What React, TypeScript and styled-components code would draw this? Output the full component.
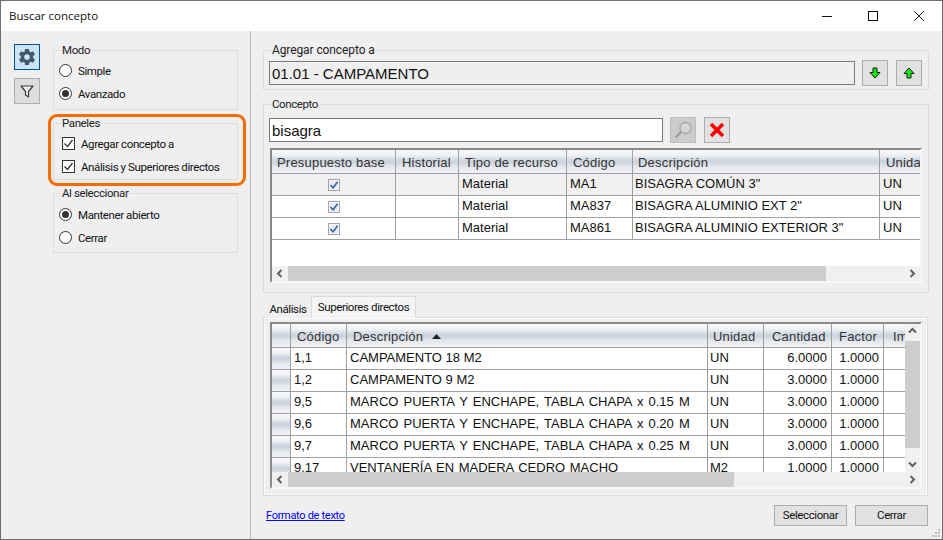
import { ReactNode } from 'react';
import styled, { createGlobalStyle } from 'styled-components';
import { IoSettingsSharp } from 'react-icons/io5';

const GlobalStyle = createGlobalStyle`
  html, body {
    margin: 0;
    padding: 0;
    background: #efefef;
  }
`;

const uiFont = `Roboto, "Open Sans", sans-serif`;
const titleFont = `"Open Sans", "Noto Sans", sans-serif`;
const gridFont = `"Liberation Sans", Arial, sans-serif`;

const Window = styled.div`
  position: relative;
  box-sizing: border-box;
  width: 943px;
  height: 540px;
  border: 1px solid #6f6f6f;
  background: #efefef;
  display: flex;
  flex-direction: column;
  overflow: hidden;
  font-family: ${uiFont};
  font-size: 11.5px;
  letter-spacing: -0.4px;
  color: #111;
`;

const TitleBar = styled.header`
  height: 30px;
  flex: none;
  background: #fff;
  display: flex;
  align-items: center;
  justify-content: space-between;
  padding-left: 8px;
`;

const Title = styled.h1`
  margin: -2px 0 0;
  font-family: ${titleFont};
  font-size: 11.5px;
  font-weight: 400;
  letter-spacing: 0;
  color: #111;
`;

const WindowControls = styled.div`
  display: flex;
  align-items: center;
`;

const WindowControl = styled.div`
  width: 46px;
  height: 30px;
  display: flex;
  align-items: center;
  justify-content: center;
`;

const Body = styled.div`
  flex: 1;
  display: flex;
  min-height: 0;
`;

const LeftPane = styled.aside`
  width: 250px;
  flex: none;
  box-sizing: border-box;
  border-right: 1px solid #b8b8b8;
  display: flex;
  padding: 12px 0 0 13px;
`;

const ToolColumn = styled.div`
  width: 39px;
  flex: none;
  display: flex;
  flex-direction: column;
  gap: 8px;
  padding-top: 1px;
`;

const ToolButton = styled.div<{ $active?: boolean }>`
  box-sizing: border-box;
  width: 26px;
  height: 26px;
  display: flex;
  align-items: center;
  justify-content: center;
  background: ${p => (p.$active ? '#cce4f7' : '#dddddd')};
  border: 1px solid ${p => (p.$active ? '#005499' : '#adadad')};
`;

const OptionColumn = styled.div`
  width: 185px;
  display: flex;
  flex-direction: column;
  gap: 6px;
`;

const Group = styled.fieldset<{ $height: number; $pad?: string }>`
  box-sizing: border-box;
  margin: 0;
  min-width: 0;
  height: ${p => p.$height}px;
  padding: ${p => p.$pad ?? '0'};
  border: 1px solid #dcdcdc;
`;

const GroupTitle = styled.legend<{ $indent: number; $size: number; $track: number }>`
  margin-left: ${p => p.$indent}px;
  padding: 0 1px;
  height: 14px;
  line-height: 15px;
  font-size: ${p => p.$size}px;
  letter-spacing: ${p => p.$track}px;
  color: #222;
`;

const OptionList = styled.div<{ $indent: number; $top?: number }>`
  display: flex;
  flex-direction: column;
  gap: 10px;
  padding: ${p => p.$top ?? 7}px 0 0 ${p => p.$indent}px;
`;

const OptionRow = styled.label`
  display: flex;
  align-items: center;
  height: 13px;
  white-space: nowrap;
`;

const RadioMark = styled.input.attrs({ type: 'radio', readOnly: true })`
  appearance: none;
  box-sizing: border-box;
  width: 13px;
  height: 13px;
  margin: 0 6px 0 0;
  border: 1px solid #333;
  border-radius: 50%;
  background: #fff;
  display: grid;
  place-content: center;
  &:checked::before {
    content: '';
    display: block;
    width: 7px;
    height: 7px;
    border-radius: 50%;
    background: #333;
  }
`;

const CheckMark = styled.span`
  box-sizing: border-box;
  width: 13px;
  height: 13px;
  margin-right: 6px;
  border: 1px solid #333;
  background: #fff;
  display: flex;
  align-items: center;
  justify-content: center;
`;

const Highlight = styled.div`
  position: absolute;
  left: 47px;
  top: 113px;
  width: 198px;
  height: 72px;
  box-sizing: border-box;
  border: 3.5px solid #f76b00;
  border-radius: 9px;
  pointer-events: none;
`;

const RightPane = styled.main`
  flex: 1;
  min-width: 0;
  box-sizing: border-box;
  padding: 12px 13px 0 12px;
  display: flex;
  flex-direction: column;
`;

const GroupGap = styled.div`
  height: 7px;
  flex: none;
`;

const FieldRow = styled.div`
  display: flex;
  align-items: center;
  height: 26px;
  margin-bottom: 5px;
`;

const FieldBox = styled.div<{ $width: number; $bg: string }>`
  box-sizing: border-box;
  width: ${p => p.$width}px;
  height: 24px;
  border: 1px solid #7a7a7a;
  background: ${p => p.$bg};
  padding-left: 2px;
  font-family: ${gridFont};
  font-size: 15px;
  letter-spacing: 0;
  line-height: 23px;
  color: #111;
`;

const IconButton = styled.div<{ $gap: number; $disabled?: boolean }>`
  box-sizing: border-box;
  width: 26px;
  height: 26px;
  margin-left: ${p => p.$gap}px;
  display: flex;
  align-items: center;
  justify-content: center;
  background: ${p => (p.$disabled ? '#cccccc' : '#e1e1e1')};
  border: 1px solid ${p => (p.$disabled ? '#bfbfbf' : '#adadad')};
`;

const DataGrid = styled.div<{ $height: number; $left?: number }>`
  box-sizing: border-box;
  width: 652px;
  height: ${p => p.$height}px;
  margin-left: ${p => p.$left ?? 0}px;
  border-top: 2px solid #8a8a8a;
  border-left: 2px solid #8a8a8a;
  border-right: 2px solid #f7f7f7;
  border-bottom: 2px solid #f7f7f7;
  background: #fff;
  display: flex;
  flex-direction: column;
  font-family: ${gridFont};
  font-size: 13px;
  letter-spacing: 0;
  color: #111;
`;

const GridMain = styled.div`
  flex: 1;
  min-height: 0;
  display: flex;
`;

const GridViewport = styled.div`
  flex: 1;
  min-width: 0;
  overflow: hidden;
`;

const HeaderRow = styled.div<{ $cols: string }>`
  display: grid;
  grid-template-columns: ${p => p.$cols};
  height: 24px;
`;

const headerFill = `linear-gradient(#f8f9fb 0%, #eff1f5 22%, #d6dbe4 40%, #ccd2dd 52%, #e3e6ec 72%, #f1f3f6 100%)`;

const HeaderCell = styled.div<{ $pad?: number }>`
  box-sizing: border-box;
  background: ${headerFill};
  border-right: 1px solid #a0a0a0;
  border-bottom: 1px solid #a0a0a0;
  padding: 0 0 0 ${p => p.$pad ?? 6}px;
  line-height: 25px;
  font-size: 13px;
  letter-spacing: 0.2px;
  color: #333;
  white-space: nowrap;
  overflow: hidden;
`;

const Row = styled.div<{ $cols: string; $current?: boolean }>`
  display: grid;
  grid-template-columns: ${p => p.$cols};
  height: 22px;
  background: ${p => (p.$current ? '#f0f0f0' : '#fff')};
`;

const Cell = styled.div<{ $align?: string; $center?: boolean; $spread?: number; $pad?: number }>`
  box-sizing: border-box;
  border-right: 1px solid #a0a0a0;
  border-bottom: 1px solid #a0a0a0;
  padding: 0 ${p => (p.$align === 'right' ? 4 : 3)}px 0 ${p => p.$pad ?? 3}px;
  line-height: 19px;
  text-align: ${p => p.$align ?? 'left'};
  word-spacing: ${p => p.$spread ?? 0}px;
  white-space: nowrap;
  overflow: hidden;
  ${p => p.$center && 'display: flex; align-items: center; justify-content: center;'}
`;

const RowHandle = styled.div`
  border-right: 1px solid #a0a0a0;
  border-bottom: 1px solid #a0a0a0;
  background: ${headerFill};
`;

const GridCheck = styled.span`
  box-sizing: border-box;
  width: 12px;
  height: 12px;
  border: 1px solid #a5a5a5;
  background: #e6ebf3;
  box-shadow: inset 0 0 0 1px #f4f6f9;
  display: flex;
  align-items: center;
  justify-content: center;
`;

const HScroll = styled.div`
  flex: none;
  height: 15px;
  background: #f0f0f0;
  display: flex;
  align-items: center;
`;

const VScroll = styled.div`
  flex: none;
  width: 15px;
  background: #f0f0f0;
  display: flex;
  flex-direction: column;
  align-items: center;
`;

const ScrollArrow = styled.div`
  flex: none;
  width: 16px;
  height: 15px;
  display: flex;
  align-items: center;
  justify-content: center;
`;

const HThumb = styled.div<{ $width: number }>`
  width: ${p => p.$width}px;
  height: 15px;
  background: #cdcdcd;
`;

const VThumb = styled.div<{ $height: number }>`
  width: 15px;
  height: ${p => p.$height}px;
  margin-top: 2px;
  background: #cdcdcd;
`;

const ScrollGap = styled.div`
  flex: 1;
`;

const TabStrip = styled.div`
  display: flex;
  align-items: flex-end;
  height: 21px;
  margin-top: 4px;
  padding-left: 2px;
  margin-bottom: -1px;
`;

const Tab = styled.div<{ $active?: boolean; $width: number }>`
  box-sizing: border-box;
  position: relative;
  width: ${p => p.$width}px;
  height: ${p => (p.$active ? 22 : 20)}px;
  padding-top: ${p => (p.$active ? 0 : 2)}px;
  text-align: center;
  line-height: ${p => (p.$active ? '21px' : '18px')};
  background: ${p => (p.$active ? '#f4f4f4' : '#efefef')};
  border: ${p => (p.$active ? '1px solid #dcdcdc' : 'none')};
  border-bottom: none;
  white-space: nowrap;
`;

const TabPanel = styled.div`
  box-sizing: border-box;
  height: 179px;
  margin-right: 1px;
  border: 1px solid #dcdcdc;
  outline: 1px solid #fbfbfb;
  outline-offset: -2px;
  padding: 4px 0 0 6px;
  background: #efefef;
`;

const Footer = styled.footer`
  display: flex;
  align-items: center;
  justify-content: space-between;
  margin-top: 8px;
  height: 22px;
  padding: 0 1px 0 3px;
`;

const TextLink = styled.a`
  color: #0000ff;
  text-decoration: underline;
  font-size: 11px;
  letter-spacing: -0.3px;
`;

const FooterButtons = styled.div`
  display: flex;
  gap: 8px;
`;

const PushButton = styled.div`
  box-sizing: border-box;
  width: 73px;
  height: 21px;
  border: 1px solid #adadad;
  background: #e1e1e1;
  text-align: center;
  line-height: 19px;
  color: #111;
`;

const ResizeGrip = styled.svg`
  position: absolute;
  right: 1px;
  bottom: 1px;
`;

// Drawings
const MinimizeIcon = () => (
  <svg width="12" height="12" viewBox="0 0 12 12"><path d="M1 6.5h10" stroke="#111" fill="none" /></svg>
);
const MaximizeIcon = () => (
  <svg width="12" height="12" viewBox="0 0 12 12"><rect x="1.5" y="1.5" width="9" height="9" stroke="#111" fill="none" /></svg>
);
const CloseIcon = () => (
  <svg width="12" height="12" viewBox="0 0 12 12"><path d="M1 1l10 10M11 1L1 11" stroke="#222" fill="none" /></svg>
);
const FunnelIcon = () => (
  <svg width="14" height="14" viewBox="0 0 14 14">
    <path d="M1 2h12L8.5 7.5v5.5l-3-2V7.5z" stroke="#3c3c3c" strokeWidth="1.2" fill="#eee" strokeLinejoin="round" />
  </svg>
);
const TickIcon = ({ color, size, weight = 1.3 }: { color: string; size: number; weight?: number }) => (
  <svg width={size} height={size} viewBox="0 0 11 11">
    <path d="M1.5 5.5l3 3 5-6.5" stroke={color} strokeWidth={weight} fill="none" />
  </svg>
);
const ArrowIcon = ({ up }: { up?: boolean }) => (
  <svg width="12" height="12" viewBox="0 0 12 12">
    <path
      d={up ? 'M6 1L11 6.5H8V11H4V6.5H1z' : 'M6 11L11 5.5H8V1H4V5.5H1z'}
      fill="#0cf00c"
      stroke="#1a1a1a"
      strokeWidth="1"
      strokeLinejoin="miter"
    />
  </svg>
);
const SearchIcon = () => (
  <svg width="20" height="20" viewBox="0 0 20 20">
    <circle cx="12.5" cy="8" r="5.5" fill="#d6d6d6" stroke="#a3a3a3" strokeWidth="1.3" />
    <path d="M8 12l-5.5 5.5" stroke="#9a9a9a" strokeWidth="2.2" />
  </svg>
);
const CancelIcon = () => (
  <svg width="16" height="16" viewBox="0 0 16 16">
    <path d="M2 2l12 12M14 2L2 14" stroke="#ff0000" strokeWidth="3.6" />
  </svg>
);
const SortIcon = () => (
  <svg width="9" height="5" viewBox="0 0 9 5" style={{ marginLeft: 9, verticalAlign: 2 }}>
    <path d="M4.5 0L9 5H0z" fill="#222" />
  </svg>
);
const Chevron = ({ dir }: { dir: 'left' | 'right' | 'up' | 'down' }) => {
  const d = {
    left: 'M5.5 1L2 4.5L5.5 8',
    right: 'M2.5 1L6 4.5L2.5 8',
    up: 'M1 5.5L4.5 2L8 5.5',
    down: 'M1 2.5L4.5 6L8 2.5',
  }[dir];
  return (
    <svg width="9" height="9" viewBox="0 0 9 9">
      <path d={d} stroke="#606060" strokeWidth="2" fill="none" />
    </svg>
  );
};

function Radio({ label, checked }: { label: string; checked?: boolean }) {
  return (
    <OptionRow>
      <RadioMark checked={!!checked} />
      {label}
    </OptionRow>
  );
}

function Check({ label }: { label: string }) {
  return (
    <OptionRow>
      <CheckMark><TickIcon color="#333" size={11} /></CheckMark>
      {label}
    </OptionRow>
  );
}

function HBar({ thumb }: { thumb: number }) {
  return (
    <HScroll>
      <ScrollArrow><Chevron dir="left" /></ScrollArrow>
      <HThumb $width={thumb} />
      <ScrollGap />
      <ScrollArrow><Chevron dir="right" /></ScrollArrow>
    </HScroll>
  );
}

const conceptCols = '124px 63px 108px 66px 247px 100px';
const conceptRows = [
  ['MA1', 'BISAGRA COMÚN 3"'],
  ['MA837', 'BISAGRA ALUMINIO EXT 2"'],
  ['MA861', 'BISAGRA ALUMINIO EXTERIOR 3"'],
];

const parentCols = '19px 56px 361px 56px 68px 52px 60px';
const parentRows = [
  ['1,1', 'CAMPAMENTO 18 M2', 'UN', '6.0000', 0],
  ['1,2', 'CAMPAMENTO 9 M2', 'UN', '3.0000', 0],
  ['9,5', 'MARCO PUERTA Y ENCHAPE, TABLA CHAPA x 0.15 M', 'UN', '3.0000', 1.5],
  ['9,6', 'MARCO PUERTA Y ENCHAPE, TABLA CHAPA x 0.20 M', 'UN', '3.0000', 1.5],
  ['9,7', 'MARCO PUERTA Y ENCHAPE, TABLA CHAPA x 0.25 M', 'UN', '3.0000', 1.5],
  ['9.17', 'VENTANERÍA EN MADERA CEDRO MACHO', 'M2', '1.0000', 1],
] as const;

interface PanelProps {
  title: string;
  height: number;
  pad?: string;
  indent?: number;
  size?: number;
  track?: number;
  children: ReactNode;
}

function Panel({ title, height, pad, indent = 7, size = 11.5, track = -0.4, children }: PanelProps) {
  return (
    <Group $height={height} $pad={pad}>
      <GroupTitle $indent={indent} $size={size} $track={track}>{title}</GroupTitle>
      {children}
    </Group>
  );
}

export default function App() {
  return (
    <>
      <GlobalStyle />
      <Window>
        <TitleBar>
          <Title>Buscar concepto</Title>
          <WindowControls>
            <WindowControl><MinimizeIcon /></WindowControl>
            <WindowControl><MaximizeIcon /></WindowControl>
            <WindowControl><CloseIcon /></WindowControl>
          </WindowControls>
        </TitleBar>
        <Body>
          <LeftPane>
            <ToolColumn>
              <ToolButton $active><IoSettingsSharp size={18} color="#41596b" /></ToolButton>
              <ToolButton><FunnelIcon /></ToolButton>
            </ToolColumn>
            <OptionColumn>
              <Panel title="Modo" height={67}>
                <OptionList $indent={5}>
                  <Radio label="Simple" />
                  <Radio label="Avanzado" checked />
                </OptionList>
              </Panel>
              <Panel title="Paneles" height={64}>
                <OptionList $indent={8}>
                  <Check label="Agregar concepto a" />
                  <Check label="Análisis y Superiores directos" />
                </OptionList>
              </Panel>
              <Panel title="Al seleccionar" height={67}>
                <OptionList $indent={5} $top={8}>
                  <Radio label="Mantener abierto" checked />
                  <Radio label="Cerrar" />
                </OptionList>
              </Panel>
            </OptionColumn>
          </LeftPane>
          <RightPane>
            <Panel title="Agregar concepto a" height={47} pad="3px 0 0 5px" indent={2} size={12} track={-0.1}>
              <FieldRow>
                <FieldBox $width={586} $bg="#efefef">01.01 - CAMPAMENTO</FieldBox>
                <IconButton $gap={7}><ArrowIcon /></IconButton>
                <IconButton $gap={8}><ArrowIcon up /></IconButton>
              </FieldRow>
            </Panel>
            <GroupGap />
            <Panel title="Concepto" height={196} pad="6px 0 0 5px" indent={2}>
              <FieldRow>
                <FieldBox $width={394} $bg="#fff">bisagra</FieldBox>
                <IconButton $gap={7} $disabled><SearchIcon /></IconButton>
                <IconButton $gap={8}><CancelIcon /></IconButton>
              </FieldRow>
              <DataGrid $height={135} $left={1}>
                <GridViewport>
                  <HeaderRow $cols={conceptCols}>
                    <HeaderCell $pad={5}>Presupuesto base</HeaderCell>
                    <HeaderCell>Historial</HeaderCell>
                    <HeaderCell>Tipo de recurso</HeaderCell>
                    <HeaderCell>Código</HeaderCell>
                    <HeaderCell $pad={5}>Descripción</HeaderCell>
                    <HeaderCell>Unidad</HeaderCell>
                  </HeaderRow>
                  {conceptRows.map(([code, desc], i) => (
                    <Row key={code} $cols={conceptCols} $current={i === 0}>
                      <Cell $center>
                        <GridCheck><TickIcon color="#3a62a8" size={10} weight={1.8} /></GridCheck>
                      </Cell>
                      <Cell />
                      <Cell>Material</Cell>
                      <Cell>{code}</Cell>
                      <Cell $pad={2}>{desc}</Cell>
                      <Cell>UN</Cell>
                    </Row>
                  ))}
                </GridViewport>
                <HBar thumb={538} />
              </DataGrid>
            </Panel>
            <TabStrip>
              <Tab $width={46}>Análisis</Tab>
              <Tab $width={105} $active>Superiores directos</Tab>
            </TabStrip>
            <TabPanel>
              <DataGrid $height={167}>
                <GridMain>
                  <GridViewport>
                    <HeaderRow $cols={parentCols}>
                      <HeaderCell />
                      <HeaderCell>Código</HeaderCell>
                      <HeaderCell>Descripción<SortIcon /></HeaderCell>
                      <HeaderCell $pad={5}>Unidad</HeaderCell>
                      <HeaderCell $pad={8}>Cantidad</HeaderCell>
                      <HeaderCell $pad={7}>Factor</HeaderCell>
                      <HeaderCell $pad={9}>Importe</HeaderCell>
                    </HeaderRow>
                    {parentRows.map(([code, desc, unit, qty, spread]) => (
                      <Row key={code} $cols={parentCols}>
                        <RowHandle />
                        <Cell>{code}</Cell>
                        <Cell $spread={spread}>{desc}</Cell>
                        <Cell $pad={2}>{unit}</Cell>
                        <Cell $align="right">{qty}</Cell>
                        <Cell $align="right">1.0000</Cell>
                        <Cell />
                      </Row>
                    ))}
                  </GridViewport>
                  <VScroll>
                    <ScrollArrow><Chevron dir="up" /></ScrollArrow>
                    <VThumb $height={107} />
                    <ScrollGap />
                    <ScrollArrow><Chevron dir="down" /></ScrollArrow>
                  </VScroll>
                </GridMain>
                <HBar thumb={446} />
              </DataGrid>
            </TabPanel>
            <Footer>
              <TextLink href="#">Formato de texto</TextLink>
              <FooterButtons>
                <PushButton>Seleccionar</PushButton>
                <PushButton>Cerrar</PushButton>
              </FooterButtons>
            </Footer>
          </RightPane>
        </Body>
        <Highlight />
        <ResizeGrip width="12" height="12" viewBox="0 0 12 12">
          <g fill="#bdbdbd">
            <rect x="9" y="3" width="2" height="2" />
            <rect x="6" y="6" width="2" height="2" />
            <rect x="9" y="6" width="2" height="2" />
            <rect x="3" y="9" width="2" height="2" />
            <rect x="6" y="9" width="2" height="2" />
            <rect x="9" y="9" width="2" height="2" />
          </g>
        </ResizeGrip>
      </Window>
    </>
  );
}
